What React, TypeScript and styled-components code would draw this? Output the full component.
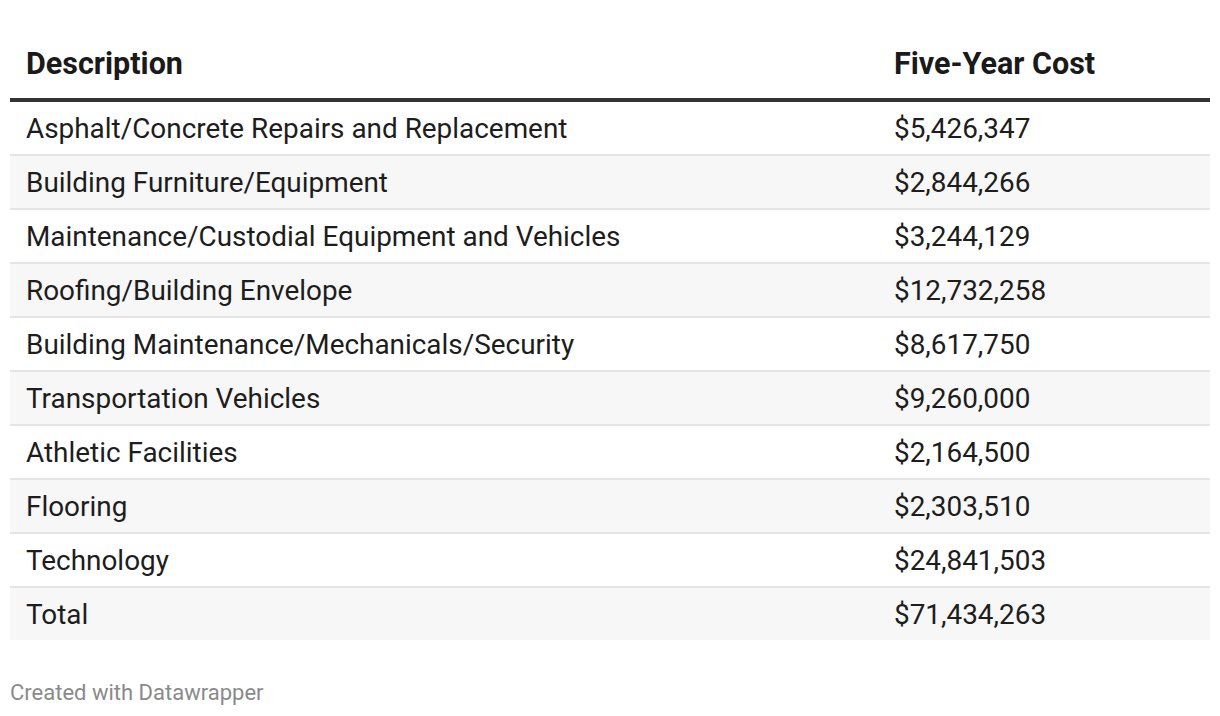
import styled, { createGlobalStyle } from "styled-components";

const GlobalStyle = createGlobalStyle`
  html, body {
    margin: 0;
    padding: 0;
    background: #fff;
  }
  body {
    font-family: Roboto, "Liberation Sans", sans-serif;
    color: #1d1d1d;
  }
`;

const Wrapper = styled.div`
  padding: 0 10px;
  width: 1200px;
`;

const Table = styled.div`
  display: flex;
  flex-direction: column;
`;

const Row = styled.div<{ $shaded?: boolean; $last?: boolean }>`
  display: grid;
  grid-template-columns: 868px 1fr;
  align-items: center;
  height: 52px;
  background-color: ${(p) => (p.$shaded ? "#f7f7f7" : "#fff")};
  border-bottom: ${(p) => (p.$last ? "none" : "2px solid #e5e5e5")};
`;

const HeadRow = styled.div`
  display: grid;
  grid-template-columns: 868px 1fr;
  align-items: center;
  height: 102px;
  padding-top: 28px;
  box-sizing: border-box;
  border-bottom: 4px solid #333;
`;

const HeadCell = styled.div`
  padding: 0 16px;
  font-size: 30.5px;
  font-weight: 700;
  color: #1a1a1a;
`;

const Cell = styled.div`
  padding: 0 16px;
  font-size: 27.9px;
  font-weight: 400;
  color: #1d1d1d;
`;

const Footer = styled.div`
  margin-top: 40px;
  font-size: 22px;
  color: #8a8a8a;
`;

const rows = [
  ["Asphalt/Concrete Repairs and Replacement", "$5,426,347"],
  ["Building Furniture/Equipment", "$2,844,266"],
  ["Maintenance/Custodial Equipment and Vehicles", "$3,244,129"],
  ["Roofing/Building Envelope", "$12,732,258"],
  ["Building Maintenance/Mechanicals/Security", "$8,617,750"],
  ["Transportation Vehicles", "$9,260,000"],
  ["Athletic Facilities", "$2,164,500"],
  ["Flooring", "$2,303,510"],
  ["Technology", "$24,841,503"],
  ["Total", "$71,434,263"],
];

export default function App() {
  return (
    <Wrapper>
      <GlobalStyle />
      <Table>
        <HeadRow>
          <HeadCell>Description</HeadCell>
          <HeadCell>Five-Year Cost</HeadCell>
        </HeadRow>
        {rows.map(([desc, cost], i) => (
          <Row key={desc} $shaded={i % 2 === 1} $last={i === rows.length - 1}>
            <Cell>{desc}</Cell>
            <Cell>{cost}</Cell>
          </Row>
        ))}
      </Table>
      <Footer>Created with Datawrapper</Footer>
    </Wrapper>
  );
}
